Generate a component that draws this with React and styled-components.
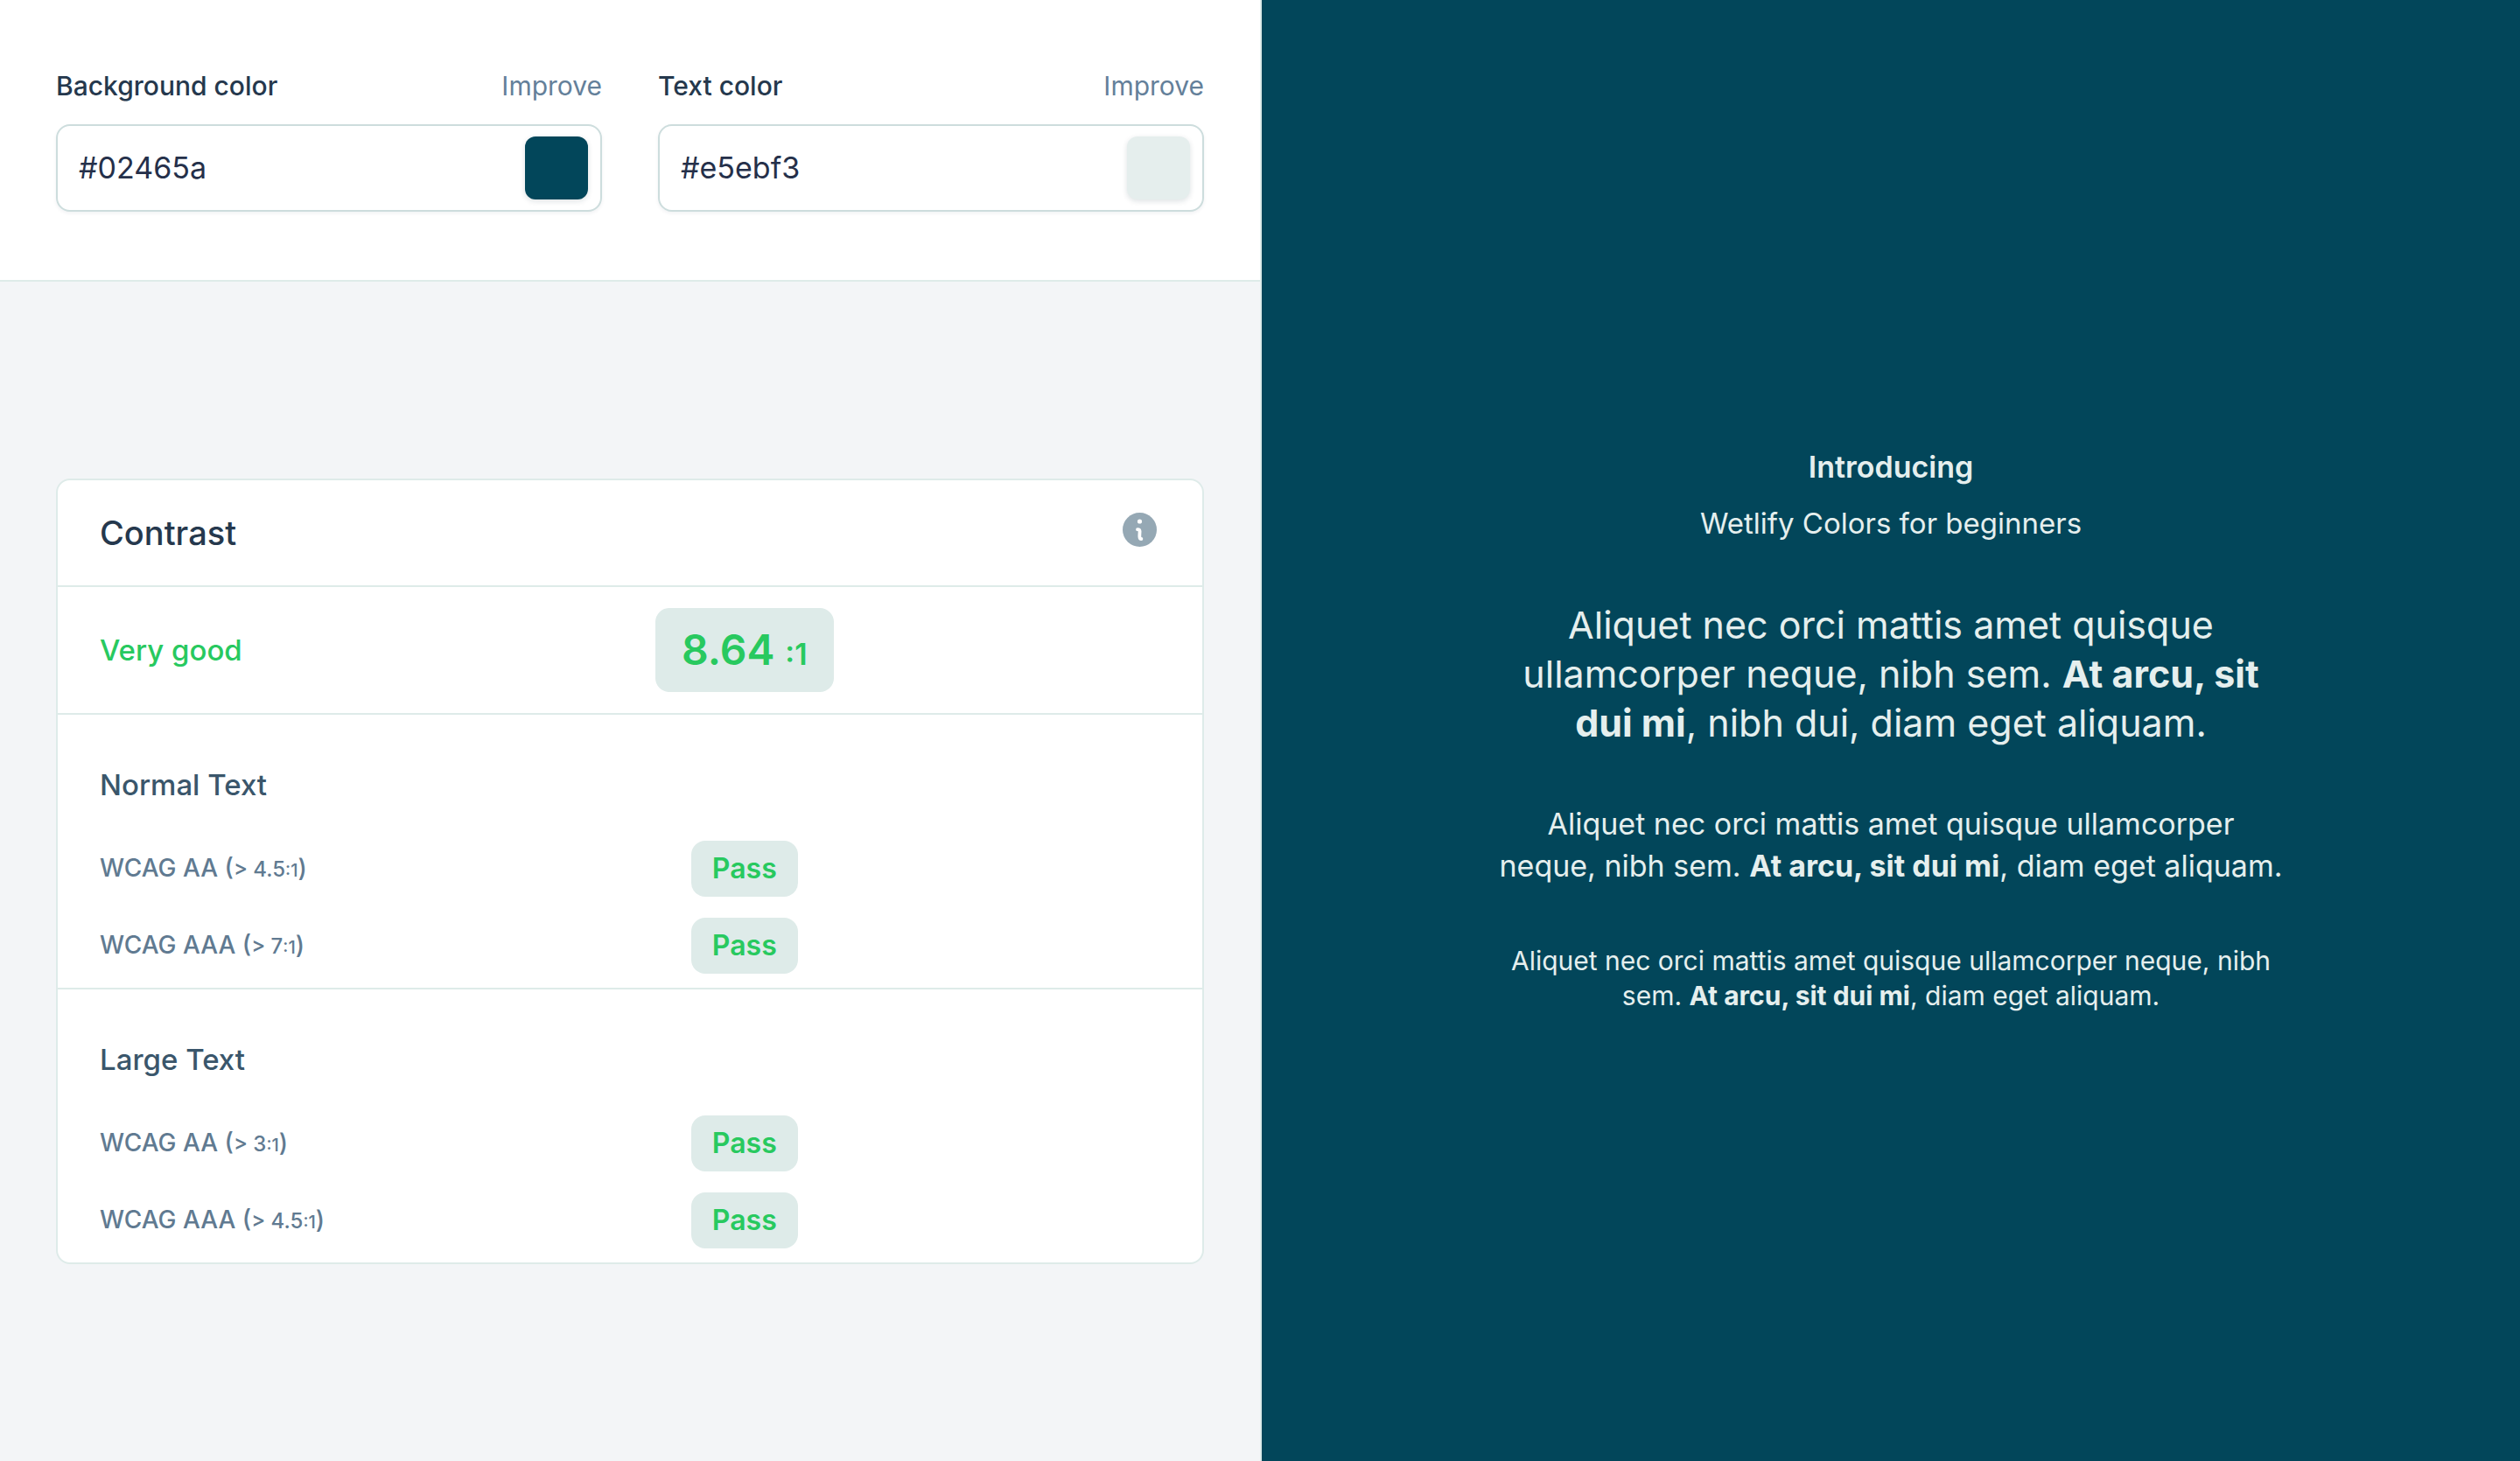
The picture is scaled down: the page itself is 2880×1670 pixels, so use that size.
import React, { useState } from "react";
import styled, { createGlobalStyle } from "styled-components";

const GlobalStyle = createGlobalStyle`
  *, *::before, *::after { box-sizing: border-box; }
  body {
    margin: 0;
    font-family: Inter, "Open Sans", sans-serif;
    color: #25384d;
    -webkit-font-smoothing: antialiased;
  }
`;

const line = "#deebe9";
const green = "#28c95f";

const Page = styled.main`
  display: grid;
  grid-template-columns: minmax(0, 1fr) minmax(0, 1fr);
  min-height: 100vh;
`;

const Controls = styled.section`
  display: flex;
  flex-direction: column;
  background: #f3f5f7;
`;

const Fields = styled.form`
  display: grid;
  grid-template-columns: minmax(0, 1fr) minmax(0, 1fr);
  gap: 64px;
  padding: 74px 64px 78px;
  background: #fff;
  border-bottom: 2px solid ${line};
`;

const Field = styled.div`
  display: flex;
  flex-direction: column;
  gap: 20px;
`;

const FieldHead = styled.div`
  display: flex;
  justify-content: space-between;
  align-items: center;
  line-height: 48px;
  font-size: 30px;
`;

const Label = styled.label`
  font-weight: 500;
`;

const Improve = styled.button`
  padding: 0;
  border: 0;
  background: none;
  font: inherit;
  color: #64809a;
  cursor: pointer;
`;

const InputBox = styled.div`
  display: flex;
  align-items: center;
  height: 100px;
  padding: 0 14px 0 24px;
  border: 2px solid #cddddd;
  border-radius: 16px;
  background: #fff;
  box-shadow: 0 2px 4px rgba(15, 40, 60, 0.06);
`;

const HexInput = styled.input`
  flex: 1;
  min-width: 0;
  padding: 0;
  border: 0;
  outline: 0;
  background: none;
  font: inherit;
  font-size: 34px;
  line-height: 48px;
  color: #25304a;
`;

const Swatch = styled.button`
  width: 72px;
  height: 72px;
  padding: 0;
  border: 0;
  border-radius: 12px;
  background: ${(p) => p.$color};
  box-shadow: 0 2px 6px rgba(15, 40, 60, 0.14);
  cursor: pointer;
`;

const Results = styled.div`
  flex: 1;
  display: flex;
  align-items: center;
  padding: 64px;
`;

const Card = styled.article`
  flex: 1;
  border: 2px solid ${line};
  border-radius: 16px;
  background: #fff;
`;

const CardHead = styled.header`
  display: flex;
  justify-content: space-between;
  align-items: center;
  height: 120px;
  padding: 0 52px 0 48px;
`;

const CardTitle = styled.h2`
  margin: 0;
  font-size: 38px;
  line-height: 56px;
  font-weight: 500;
`;

const InfoButton = styled.button`
  display: flex;
  padding: 0 0 8px;
  border: 0;
  background: none;
  color: #95a8b4;
  cursor: pointer;
`;

const ScoreRow = styled.div`
  display: grid;
  grid-template-columns: 9fr 6fr 5fr;
  align-items: center;
  height: 146px;
  border-top: 2px solid ${line};
  color: ${green};
`;

const Rating = styled.p`
  margin: 0;
  padding-left: 48px;
  font-size: 33px;
  line-height: 48px;
  font-weight: 500;
`;

const Score = styled.output`
  display: flex;
  align-items: baseline;
  gap: 12px;
  justify-self: center;
  padding: 16px 30px;
  border-radius: 16px;
  background: ${line};
  font-size: 48px;
  line-height: 64px;
  font-weight: 600;
`;

const ScoreUnit = styled.span`
  font-size: 34px;
  line-height: 48px;
`;

const Level = styled.table`
  width: 100%;
  table-layout: fixed;
  border-collapse: separate;
  border-spacing: 0;
  border-top: 2px solid ${line};
`;

const Column = styled.col`
  width: ${(p) => p.$share}%;
`;

const LevelTitle = styled.th`
  padding: 56px 48px 32px;
  text-align: left;
  font-size: 33px;
  line-height: 48px;
  font-weight: 500;
  color: #3a566b;
`;

const Criterion = styled.th`
  padding: 8px 0 16px 48px;
  text-align: left;
  font-size: 28px;
  line-height: 48px;
  font-weight: 500;
  color: #607a91;
`;

const Ratio = styled.span`
  font-size: 24px;
`;

const RatioUnit = styled.span`
  font-size: 20px;
`;

const Verdict = styled.td`
  padding: 8px 0 16px;
`;

const Badge = styled.span`
  display: block;
  width: fit-content;
  margin: 0 auto;
  padding: 8px 24px;
  border-radius: 16px;
  background: ${line};
  font-size: 32px;
  line-height: 48px;
  font-weight: 600;
  color: ${green};
`;

const Preview = styled.section`
  display: flex;
  align-items: center;
  justify-content: center;
  padding: 0 64px 2px;
  border-left: 2px solid ${line};
  background: #02465a;
  color: #e5efee;
  text-align: center;
`;

const Sample = styled.div`
  display: flex;
  flex-direction: column;
  gap: 64px;
  max-width: 896px;
`;

const Intro = styled.header`
  display: flex;
  flex-direction: column;
  gap: 16px;
`;

const IntroTitle = styled.h1`
  margin: 0;
  font-size: 34px;
  line-height: 48px;
  font-weight: 600;
`;

const Copy = styled.p`
  margin: 0;
  font-size: ${(p) => p.$size}px;
  line-height: ${(p) => p.$line}px;
`;

const Strong = styled.strong`
  font-weight: 700;
`;

const levels = [
  { title: "Normal Text", rows: [["WCAG AA", "4.5"], ["WCAG AAA", "7"]] },
  { title: "Large Text", rows: [["WCAG AA", "3"], ["WCAG AAA", "4.5"]] },
];

function ColorField({ id, label, initial, swatch }) {
  const [value, setValue] = useState(initial);
  return (
    <Field>
      <FieldHead>
        <Label htmlFor={id}>{label}</Label>
        <Improve type="button">Improve</Improve>
      </FieldHead>
      <InputBox>
        <HexInput id={id} type="text" spellCheck={false} value={value} onChange={(e) => setValue(e.target.value)} />
        <Swatch type="button" aria-label={`Pick ${label.toLowerCase()}`} $color={swatch} />
      </InputBox>
    </Field>
  );
}

function InfoIcon() {
  return (
    <svg width="39" height="39" viewBox="0 0 39 39" aria-hidden="true">
      <circle cx="19.5" cy="19.5" r="19.5" fill="currentColor" />
      <circle cx="19.5" cy="10" r="2.6" fill="#fff" />
      <path d="M17 19.2c1.8 0 2.6.8 2.6 2.4 0 1.8-.4 4-.2 6 .1 1.6.8 2.4 2 2.4" fill="none" stroke="#fff" strokeWidth="3.8" strokeLinecap="round" strokeLinejoin="round" />
    </svg>
  );
}

function LevelTable({ title, rows }) {
  return (
    <Level>
      <colgroup>
        <Column $share={45} />
        <Column $share={30} />
        <Column $share={25} />
      </colgroup>
      <thead>
        <tr>
          <LevelTitle colSpan={3} scope="colgroup">{title}</LevelTitle>
        </tr>
      </thead>
      <tbody>
        {rows.map(([name, ratio]) => (
          <tr key={name}>
            <Criterion scope="row">
              {name} (<Ratio>&gt; {ratio}</Ratio><RatioUnit>:1</RatioUnit>)
            </Criterion>
            <Verdict><Badge>Pass</Badge></Verdict>
            <td />
          </tr>
        ))}
      </tbody>
    </Level>
  );
}

export default function App() {
  return (
    <>
      <GlobalStyle />
      <Page>
        <Controls>
          <Fields>
            <ColorField id="background-color" label="Background color" initial="#02465a" swatch="#02465a" />
            <ColorField id="text-color" label="Text color" initial="#e5ebf3" swatch="#e5eeed" />
          </Fields>
          <Results>
            <Card>
              <CardHead>
                <CardTitle>Contrast</CardTitle>
                <InfoButton type="button" aria-label="About contrast"><InfoIcon /></InfoButton>
              </CardHead>
              <ScoreRow>
                <Rating>Very good</Rating>
                <Score>8.64<ScoreUnit>:1</ScoreUnit></Score>
              </ScoreRow>
              {levels.map((level) => <LevelTable key={level.title} {...level} />)}
            </Card>
          </Results>
        </Controls>
        <Preview>
          <Sample>
            <Intro>
              <IntroTitle>Introducing</IntroTitle>
              <Copy $size={33} $line={48}>Wetlify Colors for beginners</Copy>
            </Intro>
            <Copy $size={43} $line={56}>
              Aliquet nec orci mattis amet quisque ullamcorper neque, nibh sem. <Strong>At arcu, sit dui mi</Strong>, nibh dui, diam eget aliquam.
            </Copy>
            <Copy $size={34} $line={48}>
              Aliquet nec orci mattis amet quisque ullamcorper neque, nibh sem. <Strong>At arcu, sit dui mi</Strong>, diam eget aliquam.
            </Copy>
            <Copy $size={30} $line={40}>
              Aliquet nec orci mattis amet quisque ullamcorper neque, nibh sem. <Strong>At arcu, sit dui mi</Strong>, diam eget aliquam.
            </Copy>
          </Sample>
        </Preview>
      </Page>
    </>
  );
}
